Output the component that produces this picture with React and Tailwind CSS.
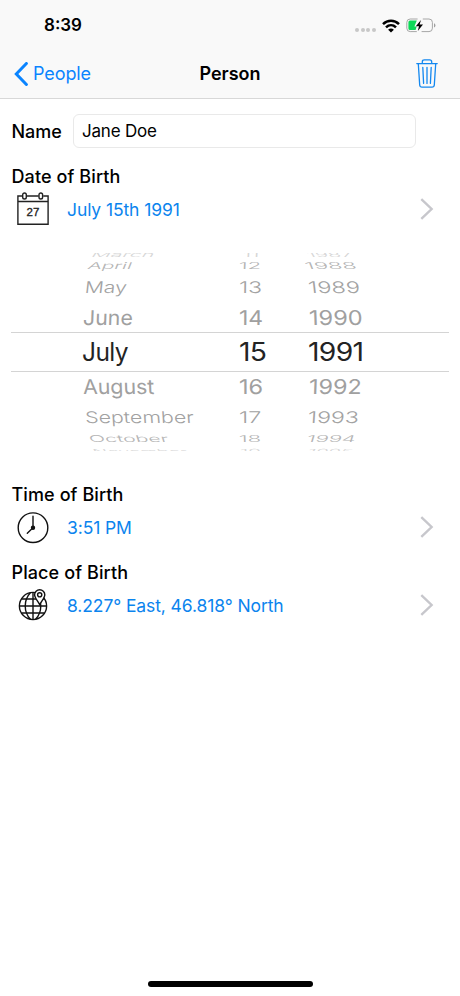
import { useState } from 'react';

// The wheel turns away from the middle row, so outer rows get flatter and fainter.
// Every cell is [text, left offset, horizontal stretch].
const wheelRows = [
  { height: 5, shift: -2, flat: 0.32, skew: -12, color: '#d6d6d6', cells: [['March', 92, 0.97], ['11', 243, 0.95], ['1987', 307, 0.95]] },
  { height: 15, shift: 0, flat: 0.43, skew: -10, color: '#b4b4b4', cells: [['April', 88, 0.95], ['12', 239, 1], ['1988', 305, 1.05]] },
  { height: 28, shift: 0, flat: 0.73, skew: -5, color: '#a2a2a2', cells: [['May', 85, 0.96], ['13', 238.5, 1.05], ['1989', 307.5, 1.07]] },
  { height: 31, shift: 0.5, flat: 0.93, skew: -2, color: '#a0a0a0', cells: [['June', 83, 0.97], ['14', 239, 1.04], ['1990', 309, 1.07]] },
  { height: 40, shift: 0, selected: true, flat: 1, skew: 0, color: '#232323', cells: [['July', 82, 0.98], ['15', 239, 1.13], ['1991', 308, 1.13]] },
  { height: 30, shift: 0, flat: 0.93, skew: 2, color: '#a0a0a0', cells: [['August', 83, 0.97], ['16', 238.5, 1.07], ['1992', 309, 1.06]] },
  { height: 29, shift: 0, flat: 0.73, skew: 3, color: '#a2a2a2', cells: [['September', 85, 0.97], ['17', 239, 1.07], ['1993', 308, 1.05]] },
  { height: 15, shift: 0, flat: 0.43, skew: 8, color: '#b4b4b4', cells: [['October', 89, 0.96], ['18', 239, 1], ['1994', 307, 1]] },
  { height: 5, shift: 2, flat: 0.32, skew: 12, color: '#d6d6d6', cells: [['November', 93, 0.88], ['19', 240, 0.95], ['1995', 308, 0.93]] },
];

// Columns lean towards the middle of the wheel
const columnStart = [0, 230, 300];
const columnLean = [1, 0.1, -0.9];

const StatusBar = () => (
  <div className="flex h-[49px] items-center justify-between pl-11 pr-[24px] pt-[3px]">
    <span className="text-[17px] font-semibold">8:39</span>
    <div className="-mt-px flex items-center">
      <div className="mr-[6px] mt-[8px] flex gap-[1.7px]">
        {[0, 1, 2, 3].map((dot) => (
          <span key={dot} className="size-[4px] rounded-full bg-[#c8c8c8]" />
        ))}
      </div>
      <svg className="mr-[6px]" width="18" height="14" viewBox="0 0 18 14" fill="none" stroke="#000" strokeWidth="2.5">
        <path d="M1 5.2C5.6 .7 12.4.7 17 5.2" />
        <path d="M4 8.4C6.9 5.6 11.1 5.6 14 8.4" />
        <path d="M9 13.5 6.1 10.7C7.8 9.2 10.2 9.2 11.9 10.7Z" fill="#000" stroke="none" />
      </svg>
      <svg width="30" height="15" viewBox="0 0 30 15" fill="none">
        <path d="M11.6 1H4.2A3.4 3.4 0 0 0 .8 4.4V10.2A3.4 3.4 0 0 0 4.2 13.6H10.8M16.8 1H23A3.4 3.4 0 0 1 26.4 4.4V10.2A3.4 3.4 0 0 1 23 13.6H15.6" stroke="#a6a6a6" />
        <path d="M28 5.2A2.4 2.4 0 0 1 28 9.6Z" fill="#a0a0a0" />
        <path d="M4 2.6H10.8L8.4 8.5H10.7L9.6 12H4A1.6 1.6 0 0 1 2.4 10.4V4.2A1.6 1.6 0 0 1 4 2.6Z" fill="#0bd957" />
        <path d="M15 2 9.8 8.2H13L11.8 12.9 17 6.5H13.6Z" fill="#000" />
      </svg>
    </div>
  </div>
);

const BackIcon = () => (
  <svg width="14" height="24" viewBox="0 0 14 24" fill="none" stroke="#0a84ff" strokeWidth="3">
    <path d="M12.4 1.5 2.3 12 12.4 22.5" strokeLinecap="round" />
  </svg>
);

const TrashIcon = () => (
  <svg width="22" height="30" viewBox="0 0 22 30" fill="none" stroke="#1388f0" strokeWidth="1.3" strokeLinecap="round" strokeLinejoin="round">
    <path d="M.8 4.6H21.2M6.3 4.3V2.9Q6.3.8 8.4.8H13.6Q15.7.8 15.7 2.9V4.3" />
    <path d="M2.3 4.8 3.7 26Q3.9 28.2 6 28.2H16Q18.1 28.2 18.3 26L19.7 4.8" />
    <path d="M6.8 8.3 7.6 24.4M11 8.3V24.4M15.2 8.3 14.4 24.4" />
  </svg>
);

const CalendarIcon = () => (
  <svg className="-mt-0.5" width="32" height="34" viewBox="0 0 32 34" fill="none" stroke="#222" strokeWidth="1.4">
    <path d="M5.5 4H.9V32.3H31.1V4H26.2M9.7 4H21.7M.9 9.5H31.1" />
    <rect x="5.7" y="1" width="3.6" height="6" rx="1.8" />
    <rect x="22" y="1" width="3.6" height="6" rx="1.8" />
    <text x="16" y="24.3" textAnchor="middle" fill="#222" stroke="#222" strokeWidth="0.3" fontSize="11.5" fontFamily="Liberation Sans, sans-serif">27</text>
  </svg>
);

const ClockIcon = () => (
  <svg className="-mt-px" width="32" height="32" viewBox="0 0 32 32" fill="none" stroke="#111" strokeWidth="1.4" strokeLinecap="round">
    <circle cx="16" cy="15.7" r="14.8" />
    <path d="M16 4.2V15.7L10.3 21.2" />
    <circle cx="16" cy="15.7" r="1.5" fill="#111" />
  </svg>
);

const GlobeIcon = () => (
  <svg className="-mt-0.5" width="32" height="32" viewBox="0 0 32 32" fill="none" stroke="#111" strokeWidth="1.4">
    <circle cx="16" cy="17" r="13.6" />
    <path d="M16 3.4V30.6M2.4 17H29.6M4.7 10H27.3M4.7 24H27.3" />
    <path d="M13.4 3.7C6.5 11 6.5 23 13.4 30.3M18.6 3.7C25.5 11 25.5 23 18.6 30.3" />
    <path d="M22.7 15.6C20 11 17.6 8.6 17.6 5.8A5.1 5.1 0 0 1 27.8 5.8C27.8 8.6 25.4 11 22.7 15.6Z" fill="#fff" />
    <circle cx="22.7" cy="5.8" r="2.1" />
  </svg>
);

const Chevron = () => (
  <svg className="-mt-0.5" width="14" height="22" viewBox="0 0 14 22" fill="none" stroke="#c7c7cc" strokeWidth="2.4">
    <path d="M1.3 1.2 11.6 11 1.3 20.8" />
  </svg>
);

const Field = ({ label, value, icon: Icon }) => (
  <section className="pl-[11.5px]">
    <h2 className="text-[18px] font-medium leading-6 tracking-[0.1px]">{label}</h2>
    <button className="flex h-[42px] w-full items-center pl-[5.5px] pr-[26px] text-left">
      <span className="flex w-[50px]">
        <Icon />
      </span>
      <span className="flex-1 text-[17.5px] tracking-[-0.1px] text-[#0b84ee]">{value}</span>
      <Chevron />
    </button>
  </section>
);

const DateWheel = () => (
  <div className="h-[198px] overflow-hidden">
    {wheelRows.map((row) => (
      <div
        key={row.cells[0][0]}
        className={row.selected ? 'mx-[11px] border-y border-[#d4d4d4]' : 'mx-[11px]'}
        style={{ height: row.height, color: row.color }}
      >
        <div className="-ml-[11px] grid h-full grid-cols-[230px_70px_1fr] grid-rows-[100%] items-center">
          {row.cells.map(([text, left, stretch], col) => (
            <span
              key={text}
              className={row.selected ? 'justify-self-start whitespace-nowrap text-[25px] leading-none tracking-[-0.6px]' : 'justify-self-start whitespace-nowrap text-[22px] leading-none'}
              style={{
                marginLeft: left - columnStart[col],
                fontWeight: row.flat < 0.9 ? 300 : 400,
                transformOrigin: 'left center',
                transform: `translateY(${row.shift}px) scale(${stretch}, ${row.flat}) skewX(${row.skew * columnLean[col]}deg)`,
              }}
            >
              {text}
            </span>
          ))}
        </div>
      </div>
    ))}
  </div>
);

const App = () => {
  const [name, setName] = useState('Jane Doe');

  return (
    <div className="flex h-[996px] w-[460px] flex-col bg-white font-['Inter',sans-serif] text-black">
      <header className="h-[99px] border-b border-[#d8d8d8] bg-[#f9f9f9]">
        <StatusBar />
        <nav className="grid h-[49px] grid-cols-3 items-center pl-3.5 pr-[22px]">
          <button className="flex items-center gap-[5px] text-[18px] tracking-[-0.1px] text-[#0a84ff]">
            <BackIcon />
            People
          </button>
          <h1 className="pl-[8px] text-center text-[18px] font-semibold">Person</h1>
          <button className="justify-self-end">
            <TrashIcon />
          </button>
        </nav>
      </header>

      <main className="flex-1">
        <div className="flex items-center pl-[11.5px] pt-[15px]">
          <label className="w-[61.5px] pt-px text-[18px] font-medium">Name</label>
          <input
            className="h-[34px] w-[343px] rounded-[6px] border border-[#e9e9e9] px-2 text-[17px] tracking-[-0.2px]"
            value={name}
            onChange={(e) => setName(e.target.value)}
          />
        </div>

        <div className="pt-[17px]">
          <Field label="Date of Birth" value="July 15th 1991" icon={CalendarIcon} />
        </div>
        <div className="pb-8 pt-[22px]">
          <DateWheel />
        </div>
        <div className="flex flex-col gap-3">
          <Field label="Time of Birth" value="3:51 PM" icon={ClockIcon} />
          <Field label="Place of Birth" value="8.227° East, 46.818° North" icon={GlobeIcon} />
        </div>
      </main>

      <footer className="flex justify-center pb-[9px]">
        <div className="h-[6px] w-[165px] rounded-full bg-black" />
      </footer>
    </div>
  );
};

export default App;
